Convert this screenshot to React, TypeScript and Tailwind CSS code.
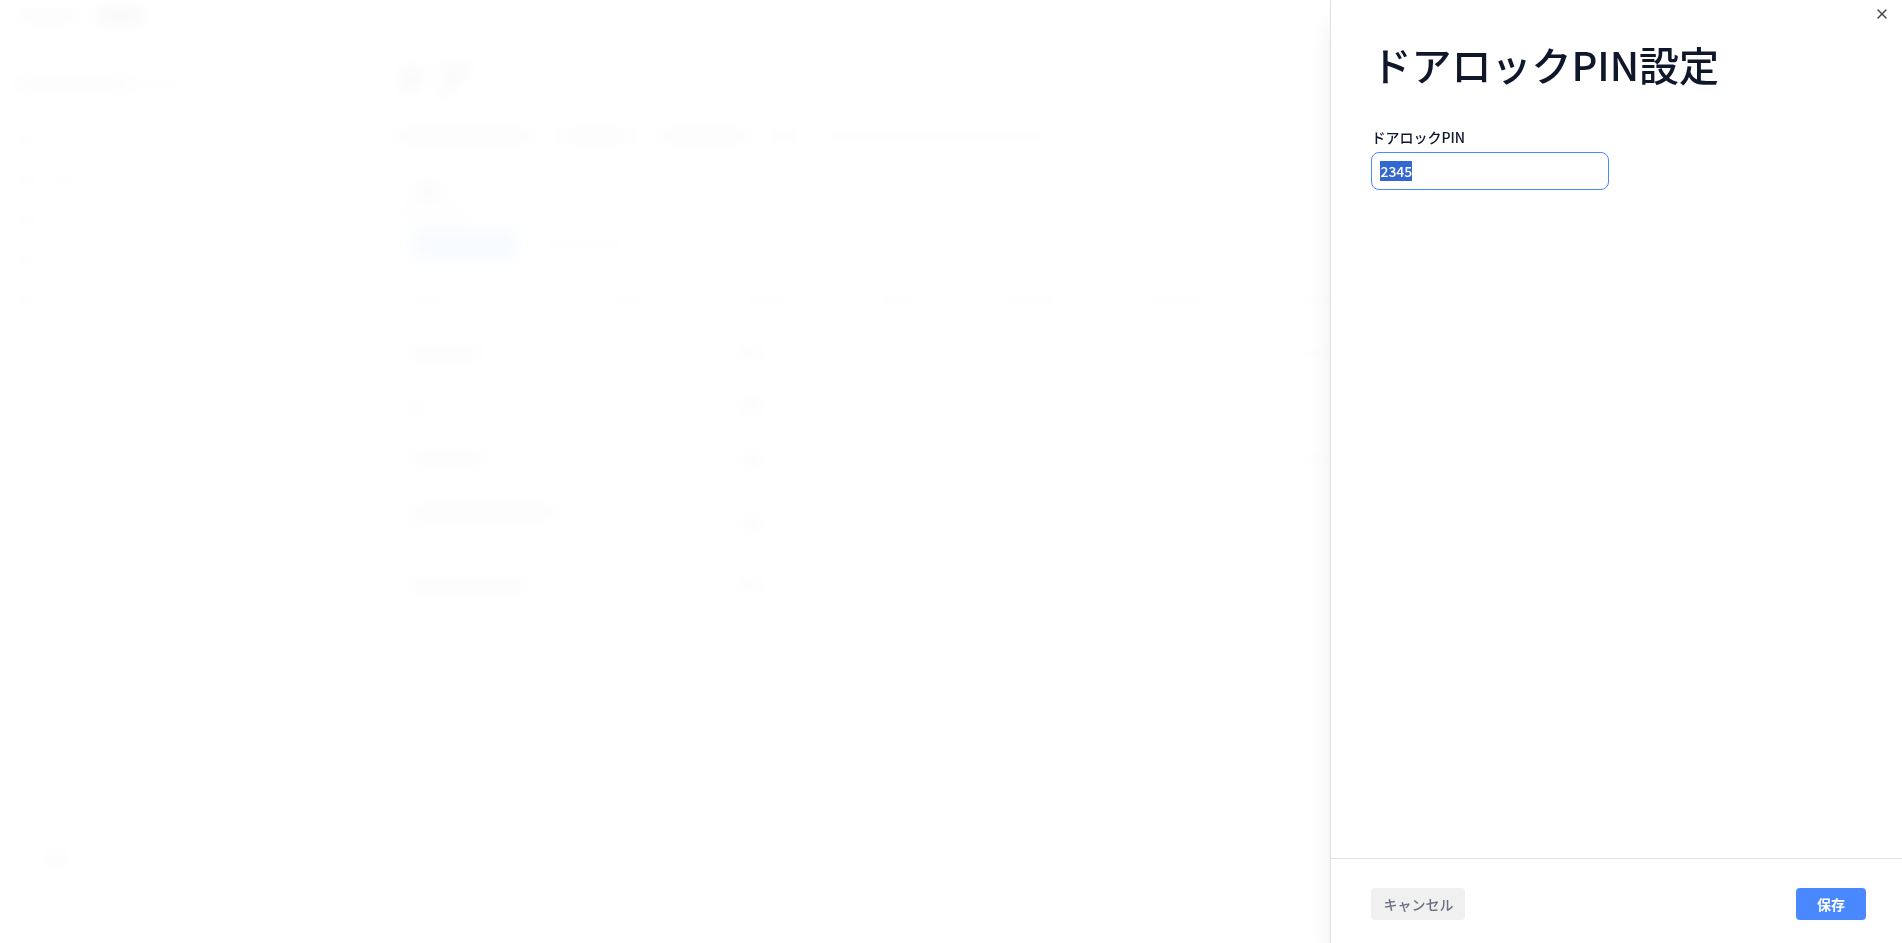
import { useEffect, useRef, useState } from "react";
import { X } from "lucide-react";

const navItems = ["w-0", "w-8", "w-4", "w-0", "w-0"];

const columns = [
  "w-10",
  "w-11",
  "w-14",
  "w-12",
  "w-16",
  "w-16",
  "w-14",
  "w-14",
];

const doors = [
  { id: 1, lines: ["w-[74px]"], height: "h-[53px]", end: "w-10" },
  { id: 2, lines: ["w-4"], height: "h-[53px]", end: "w-2" },
  { id: 3, lines: ["w-20"], height: "h-[53px]", end: "w-10" },
  { id: 4, lines: ["w-[152px]", "w-2"], height: "h-[75px]", end: "w-6" },
  { id: 5, lines: ["w-[120px]"], height: "h-[50px]", end: "w-0" },
];

function Bar({ className }: { className: string }) {
  return <div className={`h-3.5 rounded-sm ${className}`} />;
}

// Page behind the drawer, only shimmering through the backdrop
function DoorPage() {
  return (
    <div
      aria-hidden="true"
      className="flex h-screen overflow-hidden bg-white text-slate-900"
    >
      <nav className="flex w-[352px] shrink-0 flex-col px-4 pt-1.5 pb-[78px]">
        <div className="flex h-5 items-center gap-4">
          <Bar className="w-16 bg-gray-400" />
          <div className="h-4 w-12 rounded bg-gray-600" />
        </div>
        <div className="mt-12 flex h-5 items-center">
          <Bar className="w-28 bg-gray-400" />
          <Bar className="w-14 bg-gray-300" />
        </div>
        <div className="mt-9 flex flex-col gap-5">
          {navItems.map((width, i) => (
            <div key={i} className="flex h-5 items-center gap-4 px-1">
              <div className="size-3 rounded-full bg-gray-500" />
              <Bar className={`bg-gray-300 ${width}`} />
            </div>
          ))}
        </div>
        <div className="mt-auto flex items-center gap-4 px-1">
          <div className="size-2 rounded-full bg-gray-400" />
          <Bar className="w-6 bg-gray-400" />
        </div>
      </nav>

      <main className="min-w-0 flex-1 pt-[50px] pl-10">
        <p className="text-[40px] leading-[56px] font-bold">ドア</p>
        <div className="mt-[22px] flex h-4 items-center gap-5">
          <Bar className="w-36 bg-gray-400" />
          <Bar className="w-20 bg-gray-400" />
          <Bar className="w-24 bg-gray-400" />
          <Bar className="w-6 bg-gray-400" />
          <Bar className="w-60 bg-gray-300" />
        </div>
        <div className="mt-9 pl-5">
          <div className="h-5 w-8 rounded bg-gray-400" />
        </div>
        <Bar className="mt-1 w-20 bg-gray-300" />
        <div className="mt-2.5 flex items-center gap-6 pl-5">
          <div className="h-8 w-26 rounded bg-[#4a88ff]" />
          <Bar className="w-22 bg-gray-300" />
        </div>
        <table className="mt-5 w-[1200px] table-fixed">
          <colgroup>
            <col className="w-[213px]" />
            <col className="w-[134px]" />
            <col className="w-[134px]" />
            <col className="w-[126px]" />
            <col className="w-[145px]" />
            <col className="w-[150px]" />
            <col />
            <col />
          </colgroup>
          <thead>
            <tr className="h-10">
              {columns.map((width, i) => (
                <th key={i} className="first:pl-4">
                  <Bar className={`bg-gray-300 ${width}`} />
                </th>
              ))}
            </tr>
            <tr className="h-1.5" />
          </thead>
          <tbody>
            {doors.map((door) => (
              <tr key={door.id} className={door.height}>
                <td className="pl-4">
                  <div className="flex flex-col gap-2">
                    {door.lines.map((width) => (
                      <Bar key={width} className={`bg-gray-400 ${width}`} />
                    ))}
                  </div>
                </td>
                <td />
                <td>
                  <Bar className="w-6 bg-gray-400" />
                </td>
                <td />
                <td />
                <td />
                <td>
                  <Bar className={`bg-gray-300 ${door.end}`} />
                </td>
                <td />
              </tr>
            ))}
          </tbody>
        </table>
      </main>
    </div>
  );
}

interface DrawerProps {
  onClose: () => void;
}

function PinDrawer({ onClose }: DrawerProps) {
  const [pin, setPin] = useState("2345");
  const inputRef = useRef<HTMLInputElement>(null);

  useEffect(() => {
    inputRef.current?.focus();
    inputRef.current?.select();
  }, []);

  return (
    <div
      role="dialog"
      aria-modal="true"
      aria-labelledby="pin-title"
      className="fixed inset-y-0 right-0 box-content flex w-[30%] flex-col border-l border-[#e0e0e0] bg-white text-slate-900 shadow-xl"
    >
      <div className="flex h-7 shrink-0 items-center justify-end pr-[11px]">
        <button
          type="button"
          aria-label="閉じる"
          onClick={onClose}
          className="p-px text-[#444]"
        >
          <X className="size-4" strokeWidth={2} />
        </button>
      </div>

      <form
        className="flex min-h-0 flex-1 flex-col"
        onSubmit={(e) => e.preventDefault()}
      >
        <div className="flex-1 overflow-y-auto px-10 pt-1.5">
          <h1
            id="pin-title"
            className="text-[40px] leading-[60px] font-medium whitespace-nowrap"
          >
            ドアロックPIN設定
          </h1>
          <label
            htmlFor="pin"
            className="mt-[33px] block text-sm leading-5 font-medium"
          >
            ドアロックPIN
          </label>
          <input
            id="pin"
            ref={inputRef}
            type="text"
            value={pin}
            onChange={(e) => setPin(e.target.value)}
            className="mt-[5px] block h-[38px] w-[238px] rounded-lg border border-[#4a88ff] px-2 text-sm font-medium outline-none selection:bg-[#3367d1] selection:text-white"
          />
        </div>

        <div className="flex h-[85px] shrink-0 items-center justify-between border-t border-[#e0e0e0] pt-1.5 pr-9 pl-10">
          <button
            type="button"
            onClick={onClose}
            className="h-8 rounded bg-[#f0f0f0] px-3 text-sm font-medium text-gray-500"
          >
            キャンセル
          </button>
          <button
            type="submit"
            className="h-8 rounded bg-[#4a88ff] px-[21px] text-sm font-bold text-white"
          >
            保存
          </button>
        </div>
      </form>
    </div>
  );
}

export default function App() {
  const [open, setOpen] = useState(true);

  return (
    <div className="font-['Noto_Sans_CJK_JP',sans-serif]">
      <DoorPage />
      {open && (
        <>
          <div className="fixed inset-0 bg-white/96 backdrop-blur-sm" />
          <PinDrawer onClose={() => setOpen(false)} />
        </>
      )}
    </div>
  );
}
